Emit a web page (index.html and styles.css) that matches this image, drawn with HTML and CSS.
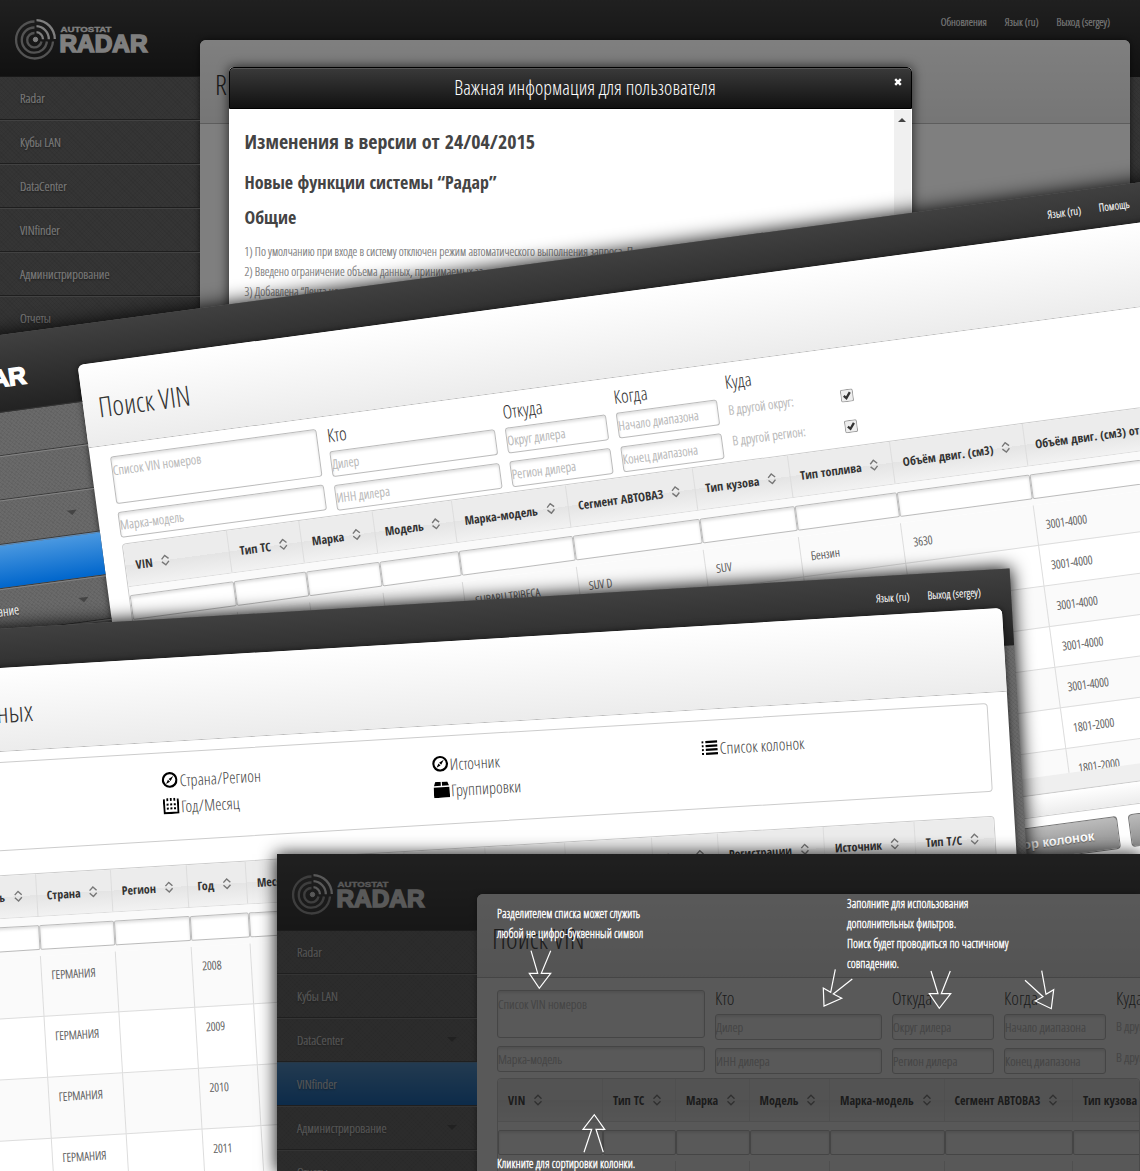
FILE: index.html
```html
<!DOCTYPE html>
<html lang="ru">
<head>
<meta charset="utf-8">
<title>Autostat Radar</title>
<link rel="stylesheet" href="styles.css">
</head>
<body>
<svg class="defs" width="0" height="0" aria-hidden="true">
  <symbol id="logo" viewBox="0 0 140 46">
    <g fill="none" stroke="#a6a6a6" stroke-width="2.3">
      <path d="M20.5 3.5a18.5 18.5 0 1 0 18.5 20"/>
      <path d="M20.5 9.5a12.6 12.6 0 1 0 12.4 14"/>
      <path d="M20.5 15a7.2 7.2 0 1 0 7 8.5"/>
    </g>
    <g fill="none" stroke="#fff" stroke-width="2.3">
      <path d="M22.5 2.1a19 19 0 0 1 18.300 19"/>
      <path d="M22.500 8.200a13 13 0 0 1 12.300 13"/>
      <path d="M22.500 14.200a7 7 0 0 1 6.500 7"/>
      <circle cx="21.500" cy="21.500" r="2.200" fill="#fff" stroke-width="1"/>
    </g>
    <text x="46.500" y="13.800" font-size="8" textLength="51" lengthAdjust="spacingAndGlyphs" stroke="#fff" stroke-width=".3">AUTOSTAT</text>
    <text x="45.500" y="33.500" font-size="24.500" textLength="88" lengthAdjust="spacingAndGlyphs" stroke="#fff" stroke-width="1.600">RADAR</text>
  </symbol>
  <symbol id="sort" viewBox="0 0 10 12">
    <path d="M1.500 4.700 5 1.200 8.500 4.700M1.500 7.300 5 10.800 8.500 7.300" fill="none" stroke="#777" stroke-width="1.400"/>
  </symbol>
  <symbol id="compass" viewBox="0 0 16 16">
    <circle cx="8" cy="8" r="6.800" fill="none" stroke="#000" stroke-width="2.200"/>
    <path d="M11.800 4.200 9 9 7 7ZM4.200 11.800 6.300 7.700 8.300 9.700Z" fill="#000"/>
  </symbol>
  <symbol id="calendar" viewBox="0 0 16 16">
    <path d="M1 1v14h14V1" fill="none" stroke="#000" stroke-width="2"/>
    <path d="M4.500 0v3M8 0v3M11.500 0v3" stroke="#000" stroke-width="1.800"/>
    <path d="M3.500 6.500h9.500M3.500 10.500h9.500" stroke="#000" stroke-width="2" stroke-dasharray="2 1.600"/>
  </symbol>
  <symbol id="box" viewBox="0 0 16 16">
    <path d="M0 5.500h16V16H0zM2 0h5.400v4H.5zM8.600 0H14l1.500 4H8.600z" fill="#000"/>
  </symbol>
  <symbol id="list" viewBox="0 0 16 16">
    <path d="M4 2.200h12M4 6.100h12M4 10h12M4 13.900h12" stroke="#000" stroke-width="2.200"/>
    <path d="M0 2.200h2M0 6.100h2M0 10h2M0 13.900h2" stroke="#000" stroke-width="2"/>
  </symbol>
</svg>

<section class="win win-news">
  <aside class="side">
    <div class="brand"><svg class="logo"><use href="#logo"/></svg></div>
    <ul class="menu">
      <li>Radar</li><li>Кубы LAN</li><li>DataCenter</li><li>VINfinder</li><li>Администрирование</li><li>Отчеты</li>
    </ul>
  </aside>
  <main class="main">
    <nav class="nav"><span>Обновления</span><span>Язык (ru)</span><span>Выход (sergey)</span></nav>
    <div class="panel"><h1 class="title">R</h1></div>
  </main>
  <div class="dim dim-half"></div>
  <div class="modal">
    <header class="modal-head"><span class="modal-title">Важная информация для пользователя</span><svg class="close" viewBox="0 0 8 8"><path d="M1.200 1.200 6.800 6.800M6.800 1.200 1.200 6.800" stroke="#fff" stroke-width="2.400"/></svg></header>
    <div class="modal-body">
      <div class="news">
        <h2>Изменения в версии от 24/04/2015</h2>
        <h3>Новые функции системы “Радар”</h3>
        <h3>Общие</h3>
        <p>1) По умолчанию при входе в систему отключен режим автоматического выполнения запроса. П</p>
        <p>2) Введено ограничение объема данных, принимаемых за</p>
        <p>3) Добавлена “Лента но</p>
      </div>
      <div class="scroll"><i></i></div>
    </div>
  </div>
</section>

<section class="win win-vin">
  <aside class="side">
    <div class="brand"><svg class="logo"><use href="#logo"/></svg></div>
    <ul class="menu">
      <li>Radar</li><li>Кубы LAN</li><li class="sub">DataCenter</li><li class="on">VINfinder</li><li class="sub">Администрирование</li><li>Отчеты</li>
    </ul>
  </aside>
  <main class="main">
    <nav class="nav"><span>Язык (ru)</span><span>Помощь</span></nav>
    <div class="panel">
      <h1 class="title">Поиск VIN</h1>
      <div class="form">
        <div class="col first"><div class="in area">Список VIN номеров</div><div class="in">Марка-модель</div></div>
        <div class="col"><h4>Кто</h4><div class="in">Дилер</div><div class="in">ИНН дилера</div></div>
        <div class="col"><h4>Откуда</h4><div class="in">Округ дилера</div><div class="in">Регион дилера</div></div>
        <div class="col"><h4>Когда</h4><div class="in">Начало диапазона</div><div class="in">Конец диапазона</div></div>
        <div class="col checks"><h4>Куда</h4>
          <div class="check"><span>В другой округ:</span><svg viewBox="0 0 13 13"><rect x=".5" y=".5" width="12" height="12" rx="1.500" fill="#eee" stroke="#999"/><path d="M3.300 6.500 5.600 9 9.800 3.500" fill="none" stroke="#333" stroke-width="2.300"/></svg></div>
          <div class="check"><span>В другой регион:</span><svg viewBox="0 0 13 13"><rect x=".5" y=".5" width="12" height="12" rx="1.500" fill="#eee" stroke="#999"/><path d="M3.300 6.500 5.600 9 9.800 3.500" fill="none" stroke="#333" stroke-width="2.300"/></svg></div>
        </div>
        <div class="btn form-btn"></div>
      </div>
      <div class="table vin-cols">
        <div class="tr th"><b>VIN<svg><use href="#sort"/></svg></b><b>Тип ТС<svg><use href="#sort"/></svg></b><b>Марка<svg><use href="#sort"/></svg></b><b>Модель<svg><use href="#sort"/></svg></b><b>Марка-модель<svg><use href="#sort"/></svg></b><b>Сегмент АВТОВАЗ<svg><use href="#sort"/></svg></b><b>Тип кузова<svg><use href="#sort"/></svg></b><b>Тип топлива<svg><use href="#sort"/></svg></b><b>Объём двиг. (см3)<svg><use href="#sort"/></svg></b><b>Объём двиг. (см3) от</b></div>
        <div class="tr filters"><i></i><i></i><i></i><i></i><i></i><i></i><i></i><i></i><i></i><i></i></div>
        <div class="rows">
          <div class="tr td"><span></span><span></span><span></span><span></span><span>SUBARU TRIBECA</span><span>SUV D</span><span>SUV</span><span>Бензин</span><span>3630</span><span>3001-4000</span></div>
          <div class="tr td"><span></span><span></span><span></span><span></span><span></span><span></span><span></span><span></span><span></span><span>3001-4000</span></div>
          <div class="tr td"><span></span><span></span><span></span><span></span><span></span><span></span><span></span><span></span><span></span><span>3001-4000</span></div>
          <div class="tr td"><span></span><span></span><span></span><span></span><span></span><span></span><span></span><span></span><span></span><span>3001-4000</span></div>
          <div class="tr td"><span></span><span></span><span></span><span></span><span></span><span></span><span></span><span></span><span></span><span>3001-4000</span></div>
          <div class="tr td"><span></span><span></span><span></span><span></span><span></span><span></span><span></span><span></span><span></span><span>1801-2000</span></div>
          <div class="tr td"><span></span><span></span><span></span><span></span><span></span><span></span><span></span><span></span><span></span><span>1801-2000</span></div>
        </div>
        <div class="hscroll"></div>
        <div class="foot"></div>
      </div>
      <div class="actions"><div class="btn">Выбор колонок</div><div class="btn"></div></div>
    </div>
  </main>
</section>

<section class="win win-data">
  <aside class="side"></aside>
  <main class="main">
    <nav class="nav"><span>Язык (ru)</span><span>Выход (sergey)</span></nav>
    <div class="panel">
      <h1 class="title">ных</h1>
      <div class="groups">
        <div><p><svg><use href="#compass"/></svg>Страна/Регион</p><p><svg><use href="#calendar"/></svg>Год/Месяц</p></div>
        <div><p><svg><use href="#compass"/></svg>Источник</p><p><svg><use href="#box"/></svg>Группировки</p></div>
        <div><p><svg><use href="#list"/></svg>Список колонок</p></div>
      </div>
      <div class="table data-cols">
        <div class="tr th"><b class="end">Модель<svg><use href="#sort"/></svg></b><b>Страна<svg><use href="#sort"/></svg></b><b>Регион<svg><use href="#sort"/></svg></b><b>Год<svg><use href="#sort"/></svg></b><b>Месяц</b><b></b><b></b><b></b><b></b><b>Парк<svg><use href="#sort"/></svg></b><b>Регистрации<svg><use href="#sort"/></svg></b><b>Источник<svg><use href="#sort"/></svg></b><b>Тип Т/С<svg><use href="#sort"/></svg></b></div>
        <div class="tr filters"><i></i><i></i><i></i><i></i><i></i><i></i><i></i><i></i><i></i><i></i><i></i><i></i><i></i></div>
        <div class="rows">
          <div class="tr td"><span></span><span>ГЕРМАНИЯ</span><span></span><span>2008</span><span></span></div>
          <div class="tr td"><span></span><span>ГЕРМАНИЯ</span><span></span><span>2009</span><span></span></div>
          <div class="tr td"><span></span><span>ГЕРМАНИЯ</span><span></span><span>2010</span><span></span></div>
          <div class="tr td"><span></span><span>ГЕРМАНИЯ</span><span></span><span>2011</span><span></span></div>
        </div>
      </div>
    </div>
  </main>
</section>

<section class="win win-help">
  <aside class="side">
    <div class="brand"><svg class="logo"><use href="#logo"/></svg></div>
    <ul class="menu">
      <li>Radar</li><li>Кубы LAN</li><li class="sub">DataCenter</li><li class="on">VINfinder</li><li class="sub">Администрирование</li><li>Отчеты</li>
    </ul>
  </aside>
  <main class="main">
    <nav class="nav"></nav>
    <div class="panel">
      <h1 class="title">Поиск VIN</h1>
      <div class="form">
        <div class="col first"><div class="in area">Список VIN номеров</div><div class="in">Марка-модель</div></div>
        <div class="col"><h4>Кто</h4><div class="in">Дилер</div><div class="in">ИНН дилера</div></div>
        <div class="col"><h4>Откуда</h4><div class="in">Округ дилера</div><div class="in">Регион дилера</div></div>
        <div class="col"><h4>Когда</h4><div class="in">Начало диапазона</div><div class="in">Конец диапазона</div></div>
        <div class="col checks"><h4>Куда</h4><div class="check"><span>В другой округ:</span></div><div class="check"><span>В другой регион:</span></div></div>
      </div>
      <div class="table vin-cols">
        <div class="tr th"><b>VIN<svg><use href="#sort"/></svg></b><b>Тип ТС<svg><use href="#sort"/></svg></b><b>Марка<svg><use href="#sort"/></svg></b><b>Модель<svg><use href="#sort"/></svg></b><b>Марка-модель<svg><use href="#sort"/></svg></b><b>Сегмент АВТОВАЗ<svg><use href="#sort"/></svg></b><b>Тип кузова</b></div>
        <div class="tr filters"><i></i><i></i><i></i><i></i><i></i><i></i><i></i></div>
        <div class="rows">
          <div class="tr td"><span></span><span></span><span></span><span></span><span></span><span></span><span></span></div>
        </div>
      </div>
    </div>
  </main>
  <div class="dim dim-deep"></div>
  <svg class="arrows" viewBox="0 0 863 316">
    <path d="M254 95.700 260.700 118.300H252.300L262.300 133.300 273.700 118.300H264.300L273.700 95.700"/>
    <path d="M307 297.300 314.700 274.300H306L317.300 259.700 327.700 274.300H319L326.300 297.300"/>
    <path d="M558.300 114.300 553.700 137.300 546.300 133 547 151 564.700 143.300 556.300 139 575.300 124"/>
    <path d="M654 116 661 138.700H652.300L662.300 153.300 673.700 138.700H664.300L673.300 116"/>
    <path d="M748 125.300 766 141.700 758.300 146 774.300 153.700 776.700 134.700 769 139.300 764.700 115.700"/>
  </svg>
  <p class="hint hint-list">Разделителем списка может служить<br>любой не цифро-буквенный символ</p>
  <p class="hint hint-filter">Заполните для использования<br>дополнительных фильтров.<br>Поиск будет проводиться по частичному<br>совпадению.</p>
  <p class="hint hint-sort">Кликните для сортировки колонки.</p>
</section>
</body>
</html>
```
FILE: styles.css
```css
* { box-sizing: border-box; }
html, body { margin: 0; height: 1171px; overflow: hidden; }
body {
  position: relative;
  width: 1140px;
  background: #333;
  font-family: "Open Sans Condensed Light", "Open Sans", "Noto Sans", sans-serif;
  font-stretch: 75%;
  font-weight: 300;
  font-size: 13px;
  color: #555;
  white-space: nowrap;
}
h1, h2, h3, h4, p, ul { margin: 0; padding: 0; font-weight: 300; }
ul { list-style: none; }
.defs { position: absolute; }
.menu, .nav, .in, .check, .td, .news p { -webkit-text-stroke: .2px currentColor; }

/* windows */
.win {
  position: absolute;
  display: grid;
  grid-template-columns: 200px minmax(0, 1fr);
  overflow: hidden;
  transform-origin: 0 0;
  background:
    linear-gradient(#404040, #222) 0 0 / 100% 77px no-repeat,
    repeating-linear-gradient(45deg, rgba(0,0,0,.06) 0 1px, transparent 1px 3px),
    repeating-linear-gradient(-45deg, rgba(0,0,0,.04) 0 1px, transparent 1px 3px),
    #6a6a6a;
}
.win-news { left: 0; top: 0; width: 1140px; height: 500px; }
.win-vin { left: -126px; top: 351.500px; width: 1400px; height: 760px; transform: rotate(-7.64deg); box-shadow: 0 0 20px #000; }
.win-data { left: -388.500px; top: 651.800px; width: 1400px; height: 720px; transform: rotate(-3.420deg); box-shadow: 0 0 18px 1px #000; }
.win-help { left: 277px; top: 854px; width: 863px; height: 317px; box-shadow: 0 1px 16px 1px rgba(0,0,0,.9); }

/* sidebar */
.brand { height: 76px; padding: 18px 0 0 14px; }
.logo { display: block; width: 140px; height: 46px; fill: #fff; font-family: "Liberation Sans", sans-serif; font-weight: 700; }
.win-help .brand { padding-top: 19px; }
.menu li {
  position: relative;
  height: 44px;
  padding-left: 20px;
  line-height: 42px;
  font-size: 13px;
  color: #fff;
  text-shadow: 0 1px 2px rgba(0,0,0,.7);
  border-top: 1px solid #848484;
  border-bottom: 1px solid #3c3c3c;
}
.menu li:first-child { border-top-color: #333; }
.menu .sub::after {
  content: "";
  position: absolute;
  right: 20px;
  top: 18px;
  border: 5px solid transparent;
  border-top-color: #444;
  border-bottom: 0;
}
.menu .on { background: linear-gradient(#4a98e0, #0066cc); border-top-color: #5d8fc0; }

/* panel */
.main { display: flex; flex-direction: column; padding-right: 10px; }
.nav { height: 39.500px; display: flex; justify-content: flex-end; gap: 18px; padding-right: 20px; font-size: 11px; line-height: 44px; color: #fff; }
.panel { flex: 1; background: #fff; border-radius: 6px 6px 0 0; box-shadow: 0 0 6px rgba(0,0,0,.6); }
.title {
  height: 84px;
  padding-left: 15px;
  font-size: 28px;
  line-height: 89px;
  color: #333;
  background: linear-gradient(#fff, #ececec);
  border-bottom: 1px solid #bbb;
  border-radius: 6px 6px 0 0;
}
.win-vin .main, .win-help .main { padding-right: 0; }
.win-help .panel, .win-help .title { border-top-right-radius: 0; }
.win-vin .nav { padding-right: 136px; line-height: 39px; }
.win-data .nav { height: 39px; line-height: 43px; }
.win-data .title { padding-left: 180px; }

/* search form */
.form { display: grid; grid-template-columns: 208px 167px 102px 102px 126px 1fr; column-gap: 10px; height: 99.500px; padding-left: 20px; color: #b4b4b4; }
.win-help .form { margin-top: 1px; }
.col { display: flex; flex-direction: column; gap: 8px; }
.first { padding-top: 11px; }
.col h4 { height: 27px; font-size: 18.500px; line-height: 38px; color: #333; }
.in { height: 26px; line-height: 25px; font-size: 13px; border: 1px solid #bbb; border-radius: 3px; box-shadow: inset 0 2px 3px rgba(0,0,0,.12); background: #fff; }
.area { height: 48px; line-height: 27px; }
.checks { gap: 4px; }
.check { height: 27px; padding-top: 5px; line-height: 20px; display: flex; justify-content: space-between; align-items: center; }
.check svg { width: 13px; height: 13px; margin-top: 4px; }
.btn { border: 1px solid #777; border-radius: 4px; background: linear-gradient(#bbb, #8f8f8f); color: #fff; text-shadow: 0 1px 1px #666; font: 700 13px/31px "Liberation Sans", sans-serif; }
.form-btn { width: 90px; height: 32px; margin: 52px 0 0 293px; }

/* data tables */
.table { margin-left: 20px; border: 1px solid #ccc; border-radius: 4px 4px 0 0; overflow: hidden; }
.tr { display: grid; }
.vin-cols .tr { grid-template-columns: 105px 73px 73.500px 80.500px 114.500px 128.500px 95.500px 103.500px 133.500px 280px; }
.data-cols { margin: 24px 20px 0; }
.data-cols .tr { grid-template-columns: 188.500px 75px 76px 59.500px 79px 80px 80.500px 80px 87.500px 66px 106px 91px 79px; }
.th { height: 43px; background: linear-gradient(#ececec 0 50%, #e4e4e4 50%, #f2f2f2); border-bottom: 1px solid #ddd; }
.th b { display: flex; align-items: center; gap: 8px; padding-left: 10px; border-right: 1px solid #ddd; font-family: "Open Sans Condensed", "Open Sans", sans-serif; font-weight: 700; font-size: 12px; color: #333; }
.th b:last-child { border-right: 0; }
.th b svg { width: 10px; height: 12px; }
.th .end { justify-content: flex-end; padding-right: 13px; }
.filters { padding: 8px 0 6px; background: #fafafa; }
.filters i { height: 25px; background: #fff; border: 1px solid #bbb; border-radius: 2px; box-shadow: inset 0 2px 3px rgba(0,0,0,.12); }
.td span { height: 41px; padding-left: 10px; line-height: 41px; font-size: 12px; border-right: 1px solid #ddd; border-bottom: 1px solid #ddd; }
.td:nth-child(odd) { background: #fafafa; }
.data-cols .td span { height: 61px; line-height: 39px; }
.win-vin .rows { height: 270px; overflow: hidden; }
.hscroll { height: 18px; background: #efefef; border-bottom: 1px solid #ccc; }
.foot { height: 21px; background: linear-gradient(#fff, #ececec); }
.actions { display: flex; gap: 11px; padding: 9px 0 0 720px; }
.actions .btn { flex: none; width: 250px; height: 33px; padding-right: 24px; text-align: right; }

/* grouping box */
.groups { display: grid; grid-template-columns: 270.500px 270.500px 1fr; height: 89px; margin: 10px 20px 0; padding: 14px 0 0 320px; border: 1px solid #ccc; border-radius: 4px; }
.groups p { display: flex; align-items: center; gap: 2px; height: 26px; padding-top: 2px; font-size: 16.200px; line-height: 24px; color: #444; }
.groups svg { width: 16px; height: 16px; margin-top: -2px; }

/* dimming and modal */
.dim { position: absolute; inset: 0; }
.dim-half { background: rgba(0,0,0,.5); }
.dim-deep { background: rgba(18,18,18,.7); }
.modal { position: absolute; left: 229px; top: 67px; width: 683px; height: 420px; border-radius: 5px 5px 0 0; box-shadow: 0 0 12px rgba(0,0,0,.75); background: #fff; }
.modal-head { display: flex; height: 42px; border: 1px solid #000; border-radius: 5px 5px 0 0; background: linear-gradient(#3a3a3a, #111); box-shadow: inset 0 1px 0 #555; }
.modal-title { flex: 1; padding-left: 58px; text-align: center; font-size: 20px; line-height: 40px; color: #fff; }
.close { width: 8px; height: 8px; margin: 10px 9px 0 12px; }
.modal-body { display: flex; justify-content: space-between; }
.news { padding: 17px 0 0 15.500px; color: #777; font-size: 12px; }
.news h2, .news h3 { font-family: "Open Sans Condensed", "Open Sans", sans-serif; font-weight: 700; color: #444; }
.news h2 { height: 36px; font-size: 20px; line-height: 32px; }
.news h3 { height: 35px; font-size: 18px; line-height: 41px; }
.news p { line-height: 20px; }
.news h3 + p { margin-top: 10px; }
.scroll { width: 17px; margin: 1px 1px 0; height: 370px; background: #f0f0f0; padding: 8px 0 0 4px; }
.scroll i { display: block; width: 8px; border: 4px solid transparent; border-bottom-color: #444; border-top: 0; }

/* guide */
.arrows { position: absolute; left: 0; top: 1px; width: 863px; height: 316px; fill: none; stroke: #fff; stroke-width: 1.200; }
.hint { position: absolute; line-height: 20px; font-size: 12px; color: #fff; -webkit-text-stroke: .35px #fff; }
.hint-list { left: 220px; top: 50px; }
.hint-filter { left: 570px; top: 40px; }
.hint-sort { left: 220px; top: 300px; }
```
